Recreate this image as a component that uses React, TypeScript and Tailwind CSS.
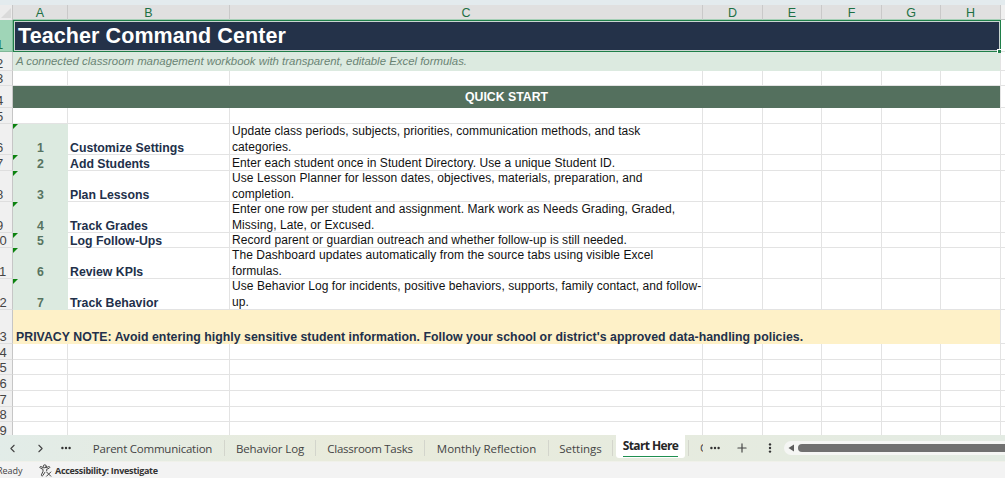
import { ChevronLeft, ChevronRight, Plus } from 'lucide-react';
import clsx from 'clsx';

interface Step {
    row: number;
    title: string;
    lines: string[];
}

const columns = ['A', 'B', 'C', 'D', 'E', 'F', 'G', 'H'];

const steps: Step[] = [
    {
        row: 6,
        title: 'Customize Settings',
        lines: ['Update class periods, subjects, priorities, communication methods, and task', 'categories.'],
    },
    { row: 7, title: 'Add Students', lines: ['Enter each student once in Student Directory. Use a unique Student ID.'] },
    {
        row: 8,
        title: 'Plan Lessons',
        lines: ['Use Lesson Planner for lesson dates, objectives, materials, preparation, and', 'completion.'],
    },
    {
        row: 9,
        title: 'Track Grades',
        lines: ['Enter one row per student and assignment. Mark work as Needs Grading, Graded,', 'Missing, Late, or Excused.'],
    },
    { row: 10, title: 'Log Follow-Ups', lines: ['Record parent or guardian outreach and whether follow-up is still needed.'] },
    {
        row: 11,
        title: 'Review KPIs',
        lines: ['The Dashboard updates automatically from the source tabs using visible Excel', 'formulas.'],
    },
    {
        row: 12,
        title: 'Track Behavior',
        lines: ['Use Behavior Log for incidents, positive behaviors, supports, family contact, and follow-', 'up.'],
    },
];

const tabs = [
    { label: 'Parent Communication', width: 'w-[144px]', text: 'tracking-[-0.23px]' },
    { label: 'Behavior Log', width: 'w-[91px]', text: 'tracking-[-0.14px]' },
    { label: 'Classroom Tasks', width: 'w-[109px]', text: 'tracking-[-0.27px]' },
    { label: 'Monthly Reflection', width: 'w-[124px]', text: 'tracking-[-0.06px]' },
    { label: 'Settings', width: 'w-[64px]', text: 'tracking-normal' },
];

const grid = 'grid grid-rows-[100%] grid-cols-[13px_55px_162px_473px_60px_59px_60px_59px_60px_1fr]';
const cell = 'border-r border-b border-[#e3e3e3]';

function RowNumber({ n, active }: { n: number; active?: boolean }) {
    return (
        <div
            className={clsx(
                'flex items-end justify-end overflow-hidden border-r border-b',
                active ? 'border-[#7fb898] bg-[#9fd5b7] text-[#1d7044]' : 'border-r-[#c6c6c6] border-b-[#dedede] bg-[#f0f0f0] text-[#444]',
            )}
        >
            <span className="w-[25px] shrink-0 text-center text-[13px] leading-[13px]">{n}</span>
        </div>
    );
}

// Plain cells from the given column up to the clipped last one
function EmptyCells({ count }: { count: number }) {
    return (
        <>
            {Array.from({ length: count }, (_, i) => (
                <div key={i} className={cell} />
            ))}
            <div className="border-b border-[#e3e3e3]" />
        </>
    );
}

function EmptyRow({ n, height }: { n: number; height: string }) {
    return (
        <div className={clsx(grid, height)}>
            <RowNumber n={n} />
            <EmptyCells count={8} />
        </div>
    );
}

function StepRow({ step, index, height }: { step: Step; index: number; height: string }) {
    return (
        <div className={clsx(grid, height)}>
            <RowNumber n={step.row} />
            <div className="relative flex items-end justify-center bg-[#dceae0] text-[12.3px] leading-[13px] font-bold text-[#577461]">
                <svg className="absolute top-0 left-0" width="5" height="5" viewBox="0 0 5 5">
                    <path d="M0 0H5L0 5Z" fill="#0b820f" />
                </svg>
                {index + 1}
            </div>
            <div className={clsx(cell, 'flex items-end pl-[2px] text-[12.3px] leading-[12px] font-bold text-[#22304a]')}>
                {step.title}
            </div>
            <div className={clsx(cell, 'flex items-end pl-[2px] text-[12px] leading-[15.5px] tracking-[0.065px] whitespace-nowrap text-[#111]')}>
                <div className="-mb-px">
                    {step.lines.map(line => (
                        <div key={line}>{line}</div>
                    ))}
                </div>
            </div>
            <EmptyCells count={5} />
        </div>
    );
}

function Dots({ vertical }: { vertical?: boolean }) {
    return (
        <svg width="12" height="12" viewBox="0 0 12 12" fill="#333" className={clsx('shrink-0', vertical && 'rotate-90')}>
            <circle cx="2.4" cy="6" r="1.2" />
            <circle cx="6" cy="6" r="1.2" />
            <circle cx="9.6" cy="6" r="1.2" />
        </svg>
    );
}

function SheetTabs() {
    return (
        <div className="flex h-[27px] border-b border-[#f0f1ea] bg-linear-to-r from-[#e2ece8] via-[#e9ebdb] via-35% to-[#e3ebe3] font-['Open_Sans',sans-serif] text-[11.5px] text-[#444]">
            <div className="flex w-[81px] shrink-0 items-center">
                <ChevronLeft size={13} strokeWidth={2} className="ml-[6px] shrink-0" />
                <ChevronRight size={13} strokeWidth={2} className="ml-[15px] shrink-0" />
                <span className="ml-[13px] flex"><Dots /></span>
            </div>
            {tabs.map(tab => (
                <div key={tab.label} className={clsx('flex shrink-0 items-center', tab.width)}>
                    <span className={clsx('flex-1 pt-[2px] text-center whitespace-nowrap', tab.text)}>{tab.label}</span>
                    <span className="h-4 w-px bg-[#d3d5cc]" />
                </div>
            ))}
            <div className="ml-[3px] flex h-[23px] w-[69px] shrink-0 justify-center rounded-b-[3px] bg-white">
                <span className="mt-[2px] flex h-[20px] w-[55px] justify-center border-b-[1.5px] border-[#1f8f50] text-[12px] leading-[18px] font-bold tracking-[-0.6px] whitespace-nowrap text-[#262626]">
                    Start Here
                </span>
            </div>
            <div className="flex flex-1 items-center">
                <span className="ml-[3px] h-4 w-px bg-[#d3d5cc]" />
                <span className="ml-[11px] w-[3px] overflow-hidden">C</span>
                <span className="ml-[6px] flex"><Dots /></span>
                <Plus size={14} strokeWidth={2} className="ml-[14px] shrink-0" />
                <span className="ml-[15px] flex"><Dots vertical /></span>
                <div className="ml-[8px] flex h-[14px] flex-1 items-center rounded-l-full bg-[#f5f6f4] pl-[4px]">
                    <svg width="6" height="8" viewBox="0 0 6 8" className="shrink-0">
                        <path d="M6 0.5V7.5L0.5 4Z" fill="#5d5d5d" />
                    </svg>
                    <div className="ml-[4px] h-2 flex-1 rounded-l-full bg-[#707070]" />
                </div>
            </div>
        </div>
    );
}

function StatusBar() {
    return (
        <div className="flex h-[16px] items-center bg-[#f3f3f3] font-['Open_Sans',sans-serif] text-[9px] leading-4 text-[#444]">
            <span className="-ml-[3px] w-[42px] pt-[2px]">Ready</span>
            <svg width="13" height="13" viewBox="0 0 13 13" fill="none" stroke="#444" strokeWidth="1" strokeLinecap="round" strokeLinejoin="round">
                <circle cx="5.8" cy="2.3" r="1.5" />
                <path d="M4.3 3.7 2 2.6C.8 2.2.5 3.7 1.4 4.1L4 5.3V7.3L2.4 10.9C2.1 12 3.4 12.4 3.9 11.5L5.8 8.4M7.3 3.7 9.7 2.6C10.8 2.2 11.2 3.6 10.3 4.1L7.7 5.3V6.8" />
                <path d="m7.6 8 4.2 4.2m0-4.2-4.2 4.2" />
            </svg>
            <span className="ml-[3px] pt-[2px] font-bold tracking-[-0.3px] text-[#333]">Accessibility: Investigate</span>
        </div>
    );
}

export default function App() {
    const heights = ['h-[31px]', 'h-[16px]', 'h-[31px]', 'h-[31px]', 'h-[15px]', 'h-[31px]', 'h-[31px]'];

    return (
        <div className="h-[478px] w-[1005px] overflow-hidden bg-white font-['Liberation_Sans',Arial,sans-serif]">
            <div className="h-[435px] overflow-hidden">
                <div className="h-[5px] bg-[#e3ebee]" />

                {/* Column letters */}
                <div className={clsx(grid, 'h-[15px] bg-[#e0e0e0] text-center text-[12.5px] leading-[17px] text-[#1d7044]')}>
                    <div className="flex items-end justify-end border-r border-[#c6c6c6] bg-[#ececec] pr-[1px] pb-[2px]">
                        <svg width="10" height="10" viewBox="0 0 10 10">
                            <path d="M10 0V10H0Z" fill="#dadada" />
                        </svg>
                    </div>
                    {columns.map(name => (
                        <div key={name} className="border-r border-b border-r-[#c9c9c9] border-b-[#a5cfb6]">{name}</div>
                    ))}
                    <div className="border-b border-[#c6c6c6] bg-[#f0f0f0]" />
                </div>

                <div className={clsx(grid, 'h-[32px]')}>
                    <RowNumber n={1} active />
                    <div className="relative col-span-8 border border-[#1f7f49] bg-[#c9d5d0] p-px">
                        <div className="h-full bg-[#243249] pl-[3px] text-[21.5px] leading-[29px] font-bold tracking-[0.09px] whitespace-nowrap text-white">
                            Teacher Command Center
                        </div>
                        <span className="absolute -right-px -bottom-[2px] size-[4px] border-t border-l border-white bg-[#1f7f49]" />
                    </div>
                    <div className="border-b border-[#e3e3e3]" />
                </div>

                <div className={clsx(grid, 'h-[19px]')}>
                    <RowNumber n={2} />
                    <div className="col-span-8 border-r border-[#e3e3e3] bg-[#dceae0] bg-clip-padding pl-[3px] text-[11.4px] leading-[18px] text-[#6a8474] italic">
                        A connected classroom management workbook with transparent, editable Excel formulas.
                    </div>
                    <div className="border-b border-[#e3e3e3]" />
                </div>

                <EmptyRow n={3} height="h-[15px]" />

                <div className={clsx(grid, 'h-[22px]')}>
                    <RowNumber n={4} />
                    <div className="col-span-8 border-r border-[#e3e3e3] bg-[#54705e] bg-clip-padding text-center text-[12.3px] leading-[23px] font-bold text-white">
                        QUICK START
                    </div>
                    <div className="border-b border-[#e3e3e3]" />
                </div>

                <EmptyRow n={5} height="h-[16px]" />

                {steps.map((step, i) => (
                    <StepRow key={step.row} step={step} index={i} height={heights[i]} />
                ))}

                <div className={clsx(grid, 'h-[34px]')}>
                    <RowNumber n={13} />
                    <div className="col-span-8 flex items-end border-r border-[#e3e3e3] bg-[#fef1c8] bg-clip-padding pl-[3px] text-[12.3px] leading-[14px] font-bold tracking-[0.035px] whitespace-nowrap text-[#22304a]">
                        PRIVACY NOTE: Avoid entering highly sensitive student information. Follow your school or district's approved data-handling policies.
                    </div>
                    <div className="border-b border-[#e3e3e3]" />
                </div>

                <EmptyRow n={14} height="h-[16px]" />
                <EmptyRow n={15} height="h-[15px]" />
                <EmptyRow n={16} height="h-[16px]" />
                <EmptyRow n={17} height="h-[16px]" />
                <EmptyRow n={18} height="h-[15px]" />
                {/* Runs under the tab bar */}
                <EmptyRow n={19} height="h-[16px]" />
            </div>

            <SheetTabs />
            <StatusBar />
        </div>
    );
}
